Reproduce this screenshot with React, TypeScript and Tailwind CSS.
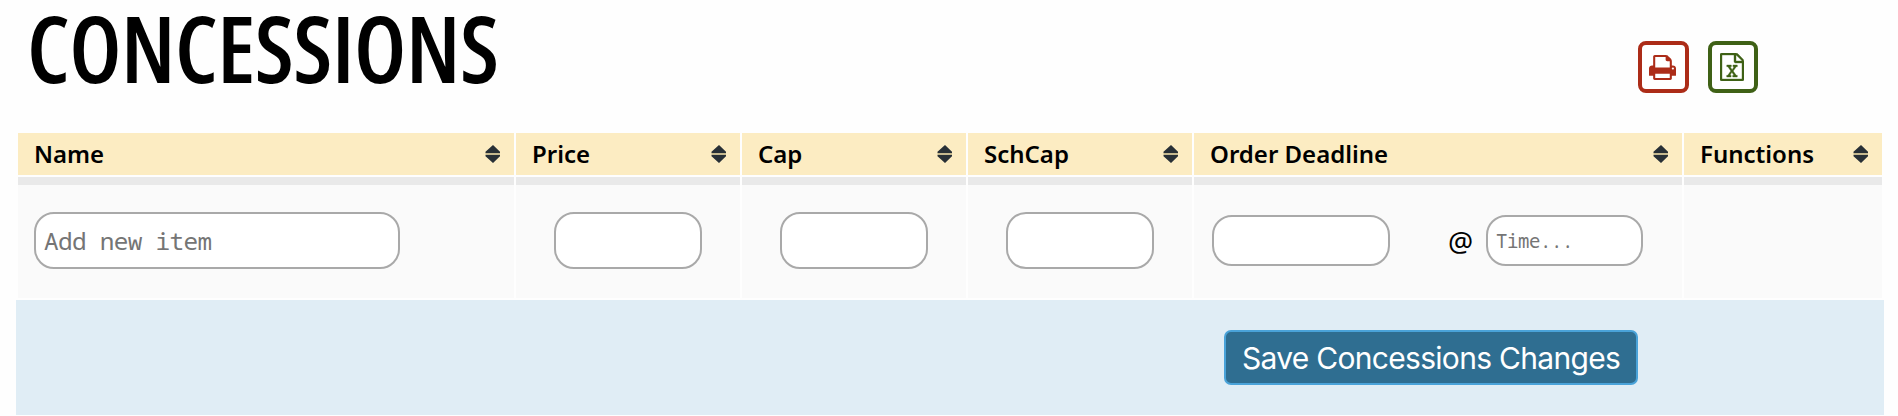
import type { ReactNode } from "react";

const PRINT =
  "M384 1536h896v-256h-896v256zm0-640h896v-384h-160q-40 0-68-28t-28-68v-160h-640v640zm1152 64q0-26-19-45t-45-19-45 19-19 45 19 45 45 19 45-19 19-45zm128 0v416q0 13-9.5 22.5t-22.5 9.5h-224v160q0 40-28 68t-68 28h-960q-40 0-68-28t-28-68v-160h-224q-13 0-22.5-9.5t-9.5-22.5v-416q0-79 56.5-135.5t135.5-56.5h64v-544q0-40 28-68t68-28h672q40 0 88 20t76 48l152 152q28 28 48 76t20 88v256h64q79 0 135.5 56.5t56.5 135.5z";
const EXCEL =
  "M1596 380q28 28 48 76t20 88v1152q0 40-28 68t-68 28h-1344q-40 0-68-28t-28-68v-1600q0-40 28-68t68-28h896q40 0 88 20t76 48zm-444-244v376h376q-10-29-22-41l-313-313q-12-12-41-22zm384 1528v-1024h-416q-40 0-68-28t-28-68v-416h-768v1536h1280zm-979-234v106h281v-106h-75l103-161q5-7 10-16.5t7.5-13.5 3.5-4h2q1 4 5 10 2 4 4.5 7.5t6 8 6.5 8.5l107 161h-76v106h291v-106h-68l-192-273 195-282h67v-107h-279v107h74l-103 159q-4 7-10 16.5t-9 13.5l-2 3h-2q-1-4-5-10-6-11-17-23l-106-159h76v-107h-290v107h68l189 272-194 283h-68z";

const COLUMNS = ["Name", "Price", "Cap", "SchCap", "Order Deadline", "Functions"];

function SortIcon() {
  return (
    <svg width="15" height="18" viewBox="0 0 15 18" aria-hidden="true">
      <path d="M0.5 9h14.5" stroke="#c5b98f" strokeWidth="2" />
      <path d="M8 0L15 6.7V8H0.5V6.7zM8 18L15 11.3V10H0.5v1.3z" fill="#283036" />
    </svg>
  );
}

function Cell({ className = "", children }: { className?: string; children?: ReactNode }) {
  return (
    <div className={`flex h-[121px] items-center border-t-8 border-[#e9e9e9] bg-[#fafafa] pb-[3px] ${className}`}>
      {children}
    </div>
  );
}

const field = "rounded-[20px] border-2 border-[#a9a9a9] bg-white outline-none placeholder:text-[#757575] placeholder:opacity-100";

export default function App() {
  return (
    <div className="h-[416px] w-[1898px] bg-[#fefefe] font-['Noto_Sans','Open_Sans',sans-serif] text-black">
      <header className="flex h-[133px] items-start justify-between pl-[27px] pr-[140px]">
        <h1 className="w-[480px] whitespace-nowrap font-['Open_Sans',sans-serif] text-[92px] font-semibold leading-[95px] tracking-[-0.45px] font-stretch-75%">
          CONCESSIONS
        </h1>
        <div className="flex gap-[19px] pt-[41px]">
          <button aria-label="Print" className="flex h-[52px] w-[51px] items-center rounded-lg border-4 border-[#ac2c18] bg-white pl-[7px] text-[#ac2c18]">
            <svg width="27" height="25" viewBox="0 128 1664 1536" fill="currentColor">
              <path d={PRINT} />
            </svg>
          </button>
          <button aria-label="Export spreadsheet" className="flex h-[52px] w-[50px] items-center rounded-lg border-4 border-[#3f6116] bg-white pl-2 text-[#3f6116]">
            <svg width="24" height="28" viewBox="128 0 1536 1792" fill="currentColor" stroke="currentColor" strokeWidth="24">
              <path d={EXCEL} />
            </svg>
          </button>
        </div>
      </header>

      <div className="ml-[18px] grid w-[1864px] grid-cols-[496px_224px_224px_224px_488px_198px] gap-0.5">
        {COLUMNS.map((label) => (
          <div key={label} className="flex h-[42px] items-center justify-between bg-[#fcecc2] pl-4 pr-3.5 text-2xl font-semibold">
            <span className="whitespace-nowrap">{label}</span>
            <SortIcon />
          </div>
        ))}
        <Cell className="pl-4">
          <input placeholder="Add new item" className={`${field} h-[57px] w-[366px] pl-2 font-['Noto_Sans_Mono','DejaVu_Sans_Mono',monospace] text-[24.4px] tracking-[-0.69px]`} />
        </Cell>
        <Cell className="pl-[38px]">
          <input className={`${field} h-[57px] w-[148px]`} />
        </Cell>
        <Cell className="pl-[38px]">
          <input className={`${field} h-[57px] w-[148px]`} />
        </Cell>
        <Cell className="pl-[38px]">
          <input className={`${field} h-[57px] w-[148px]`} />
        </Cell>
        <Cell className="pl-[18px]">
          <input className={`${field} h-[51px] w-[178px]`} />
          <span className="ml-[58px] w-[38px] pt-0.5 text-[28px]">@</span>
          <input placeholder="Time..." className={`${field} h-[51px] w-[157px] pl-2 pt-0.5 font-['Noto_Sans_Mono','DejaVu_Sans_Mono',monospace] text-[19px] tracking-[-0.4px]`} />
        </Cell>
        <Cell />
      </div>

      <div className="ml-4 mt-0.5 flex h-[115px] w-[1868px] items-start justify-end bg-[#e0edf5] pr-[246px] pt-[30px]">
        <button className="flex h-[55px] w-[414px] items-center justify-center whitespace-nowrap rounded-[7px] border-2 border-[#4aa3d9] bg-[#2f6e91] pt-0.5 font-['Inter',sans-serif] text-[30px] tracking-[-0.7px] text-white">
          Save Concessions Changes
        </button>
      </div>
    </div>
  );
}
